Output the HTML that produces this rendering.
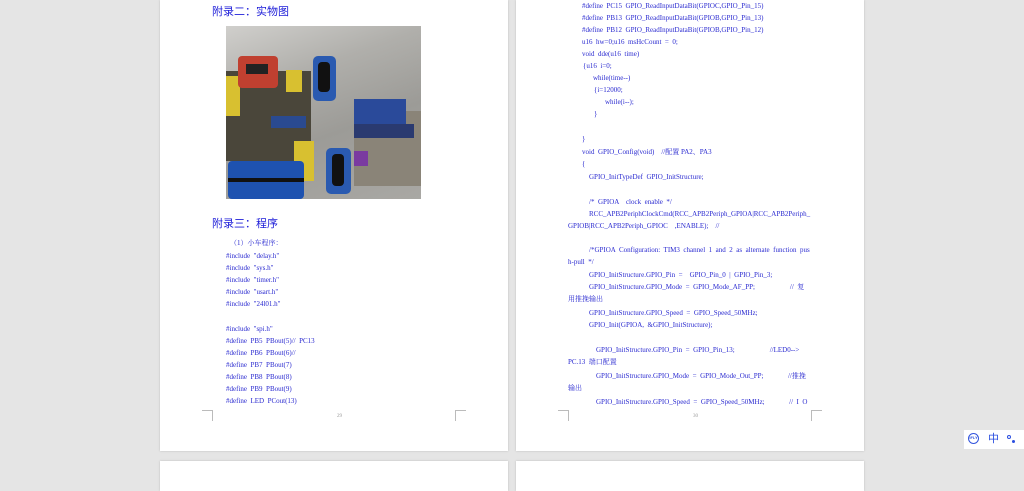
<!DOCTYPE html>
<html><head><meta charset="utf-8"><style>
body{margin:0;width:1024px;height:483px;background:#e5e5e5;position:relative;overflow:hidden;font-family:"Liberation Serif","Noto Serif CJK SC",serif;}
.pg{position:absolute;background:#fff;box-shadow:0 0 2px #bbb;}
.t{position:absolute;font-size:7px;color:#2a2ad0;white-space:pre;line-height:8px;}
.h{position:absolute;font-size:11px;color:#1c1cd8;font-family:"Liberation Sans","Noto Sans CJK SC",sans-serif;}
.c{position:absolute;width:10px;height:10px;border-color:#bbb;border-style:solid;border-width:0;}
.n{position:absolute;font-size:5px;color:#999;}
.p div{position:absolute;}
</style></head><body>
<div class="pg" style="left:160px;top:0;width:348px;height:451px"></div>
<div class="pg" style="left:516px;top:0;width:348px;height:451px"></div>
<div class="pg" style="left:160px;top:461px;width:348px;height:30px"></div>
<div class="pg" style="left:516px;top:461px;width:348px;height:30px"></div>

<div class="h" style="left:212px;top:3px">附录二：实物图</div>
<div class="p" style="position:absolute;left:226px;top:26px;width:195px;height:173px;background:linear-gradient(160deg,#d0cfcc 0%,#b0afab 30%,#9c9b97 60%,#a9a8a4 100%);overflow:hidden">
<div style="left:0;top:45px;width:85px;height:90px;background:#4a463a"></div>
<div style="left:0;top:50px;width:14px;height:40px;background:#d8c030"></div>
<div style="left:60px;top:44px;width:16px;height:22px;background:#d8c030"></div>
<div style="left:68px;top:115px;width:20px;height:40px;background:#d8c030"></div>
<div style="left:12px;top:30px;width:40px;height:32px;background:#c04030;border-radius:4px"></div>
<div style="left:20px;top:38px;width:22px;height:10px;background:#222"></div>
<div style="left:45px;top:90px;width:35px;height:12px;background:#2a4a90"></div>
<div style="left:87px;top:30px;width:23px;height:45px;background:#2a5ab0;border-radius:5px"></div>
<div style="left:92px;top:36px;width:12px;height:30px;background:#111;border-radius:4px"></div>
<div style="left:100px;top:122px;width:25px;height:46px;background:#2a5ab0;border-radius:5px"></div>
<div style="left:106px;top:128px;width:12px;height:32px;background:#111;border-radius:4px"></div>
<div style="left:2px;top:135px;width:76px;height:38px;background:#1e52b0;border-radius:4px"></div>
<div style="left:2px;top:152px;width:76px;height:4px;background:#111"></div>
<div style="left:128px;top:85px;width:67px;height:75px;background:#8a8478"></div>
<div style="left:128px;top:73px;width:52px;height:26px;background:#2a4a9a"></div>
<div style="left:128px;top:98px;width:60px;height:14px;background:#2a3a70"></div>
<div style="left:128px;top:125px;width:14px;height:15px;background:#7a3aa0"></div>
</div>

<div class="h" style="left:212px;top:215px">附录三：程序</div>
<div class="t" style="left:230px;top:239px">（1）小车程序：</div>
<div class="t" style="left:226px;top:252px">#include  "delay.h"</div>
<div class="t" style="left:226px;top:264px">#include  "sys.h"</div>
<div class="t" style="left:226px;top:276px">#include  "timer.h"</div>
<div class="t" style="left:226px;top:288px">#include  "usart.h"</div>
<div class="t" style="left:226px;top:300px">#include  "24l01.h"</div>
<div class="t" style="left:226px;top:325px">#include  "spi.h"</div>
<div class="t" style="left:226px;top:337px">#define  PB5  PBout(5)//  PC13</div>
<div class="t" style="left:226px;top:349px">#define  PB6  PBout(6)//</div>
<div class="t" style="left:226px;top:361px">#define  PB7  PBout(7)</div>
<div class="t" style="left:226px;top:373px">#define  PB8  PBout(8)</div>
<div class="t" style="left:226px;top:385px">#define  PB9  PBout(9)</div>
<div class="t" style="left:226px;top:397px">#define  LED  PCout(13)</div>
<div class="c" style="left:202px;top:410px;border-top-width:1px;border-right-width:1px"></div>
<div class="c" style="left:455px;top:410px;border-top-width:1px;border-left-width:1px"></div>
<div class="n" style="left:337px;top:414px">29</div>

<div class="t" style="left:582px;top:2px">#define  PC15  GPIO_ReadInputDataBit(GPIOC,GPIO_Pin_15)</div>
<div class="t" style="left:582px;top:14px">#define  PB13  GPIO_ReadInputDataBit(GPIOB,GPIO_Pin_13)</div>
<div class="t" style="left:582px;top:26px">#define  PB12  GPIO_ReadInputDataBit(GPIOB,GPIO_Pin_12)</div>
<div class="t" style="left:582px;top:38px">u16  hw=0;u16  msHcCount  =  0;</div>
<div class="t" style="left:582px;top:50px">void  dde(u16  time)</div>
<div class="t" style="left:583px;top:62px">{u16  i=0;</div>
<div class="t" style="left:593px;top:74px">while(time--)</div>
<div class="t" style="left:594px;top:86px">{i=12000;</div>
<div class="t" style="left:605px;top:98px">while(i--);</div>
<div class="t" style="left:594px;top:110px">}</div>
<div class="t" style="left:582px;top:135px">}</div>
<div class="t" style="left:582px;top:148px">void  GPIO_Config(void)    //配置 PA2、PA3</div>
<div class="t" style="left:582px;top:160px">{</div>
<div class="t" style="left:589px;top:173px">GPIO_InitTypeDef  GPIO_InitStructure;</div>
<div class="t" style="left:589px;top:198px">/*  GPIOA    clock  enable  */</div>
<div class="t" style="left:589px;top:210px">RCC_APB2PeriphClockCmd(RCC_APB2Periph_GPIOA|RCC_APB2Periph_</div>
<div class="t" style="left:568px;top:222px">GPIOB|RCC_APB2Periph_GPIOC    ,ENABLE);    //</div>
<div class="t" style="left:589px;top:246px">/*GPIOA  Configuration:  TIM3  channel  1  and  2  as  alternate  function  pus</div>
<div class="t" style="left:568px;top:258px">h-pull  */</div>
<div class="t" style="left:589px;top:271px">GPIO_InitStructure.GPIO_Pin  =    GPIO_Pin_0  |  GPIO_Pin_3;</div>
<div class="t" style="left:589px;top:283px">GPIO_InitStructure.GPIO_Mode  =  GPIO_Mode_AF_PP;                    //  复</div>
<div class="t" style="left:568px;top:295px">用推挽输出</div>
<div class="t" style="left:589px;top:309px">GPIO_InitStructure.GPIO_Speed  =  GPIO_Speed_50MHz;</div>
<div class="t" style="left:589px;top:321px">GPIO_Init(GPIOA,  &amp;GPIO_InitStructure);</div>
<div class="t" style="left:596px;top:346px">GPIO_InitStructure.GPIO_Pin  =  GPIO_Pin_13;                    //LED0--&gt;</div>
<div class="t" style="left:568px;top:358px">PC.13  端口配置</div>
<div class="t" style="left:596px;top:372px">GPIO_InitStructure.GPIO_Mode  =  GPIO_Mode_Out_PP;              //推挽</div>
<div class="t" style="left:568px;top:384px">输出</div>
<div class="t" style="left:596px;top:398px">GPIO_InitStructure.GPIO_Speed  =  GPIO_Speed_50MHz;              //  I  O</div>
<div class="c" style="left:558px;top:410px;border-top-width:1px;border-right-width:1px"></div>
<div class="c" style="left:811px;top:410px;border-top-width:1px;border-left-width:1px"></div>
<div class="n" style="left:693px;top:414px">30</div>

<div style="position:absolute;left:964px;top:430px;width:60px;height:19px;background:#fff"></div>
<div style="position:absolute;left:968px;top:433px;width:11px;height:11px;border:1.5px solid #3355dd;border-radius:50%;box-sizing:border-box;font-size:4px;color:#3355dd;text-align:center;line-height:8px;font-family:'Liberation Sans',sans-serif;font-weight:bold">iFLY</div>
<div style="position:absolute;left:988px;top:432px;font-size:11px;color:#2a4ee0;font-family:'Noto Sans CJK SC',sans-serif;line-height:13px">中</div>
<div style="position:absolute;left:1007px;top:435px;width:4px;height:4px;border:1px solid #2a4ee0;border-radius:50%;box-sizing:border-box"></div>
<div style="position:absolute;left:1012px;top:440px;width:3px;height:3px;background:#2a4ee0;border-radius:50%"></div>
</body></html>
